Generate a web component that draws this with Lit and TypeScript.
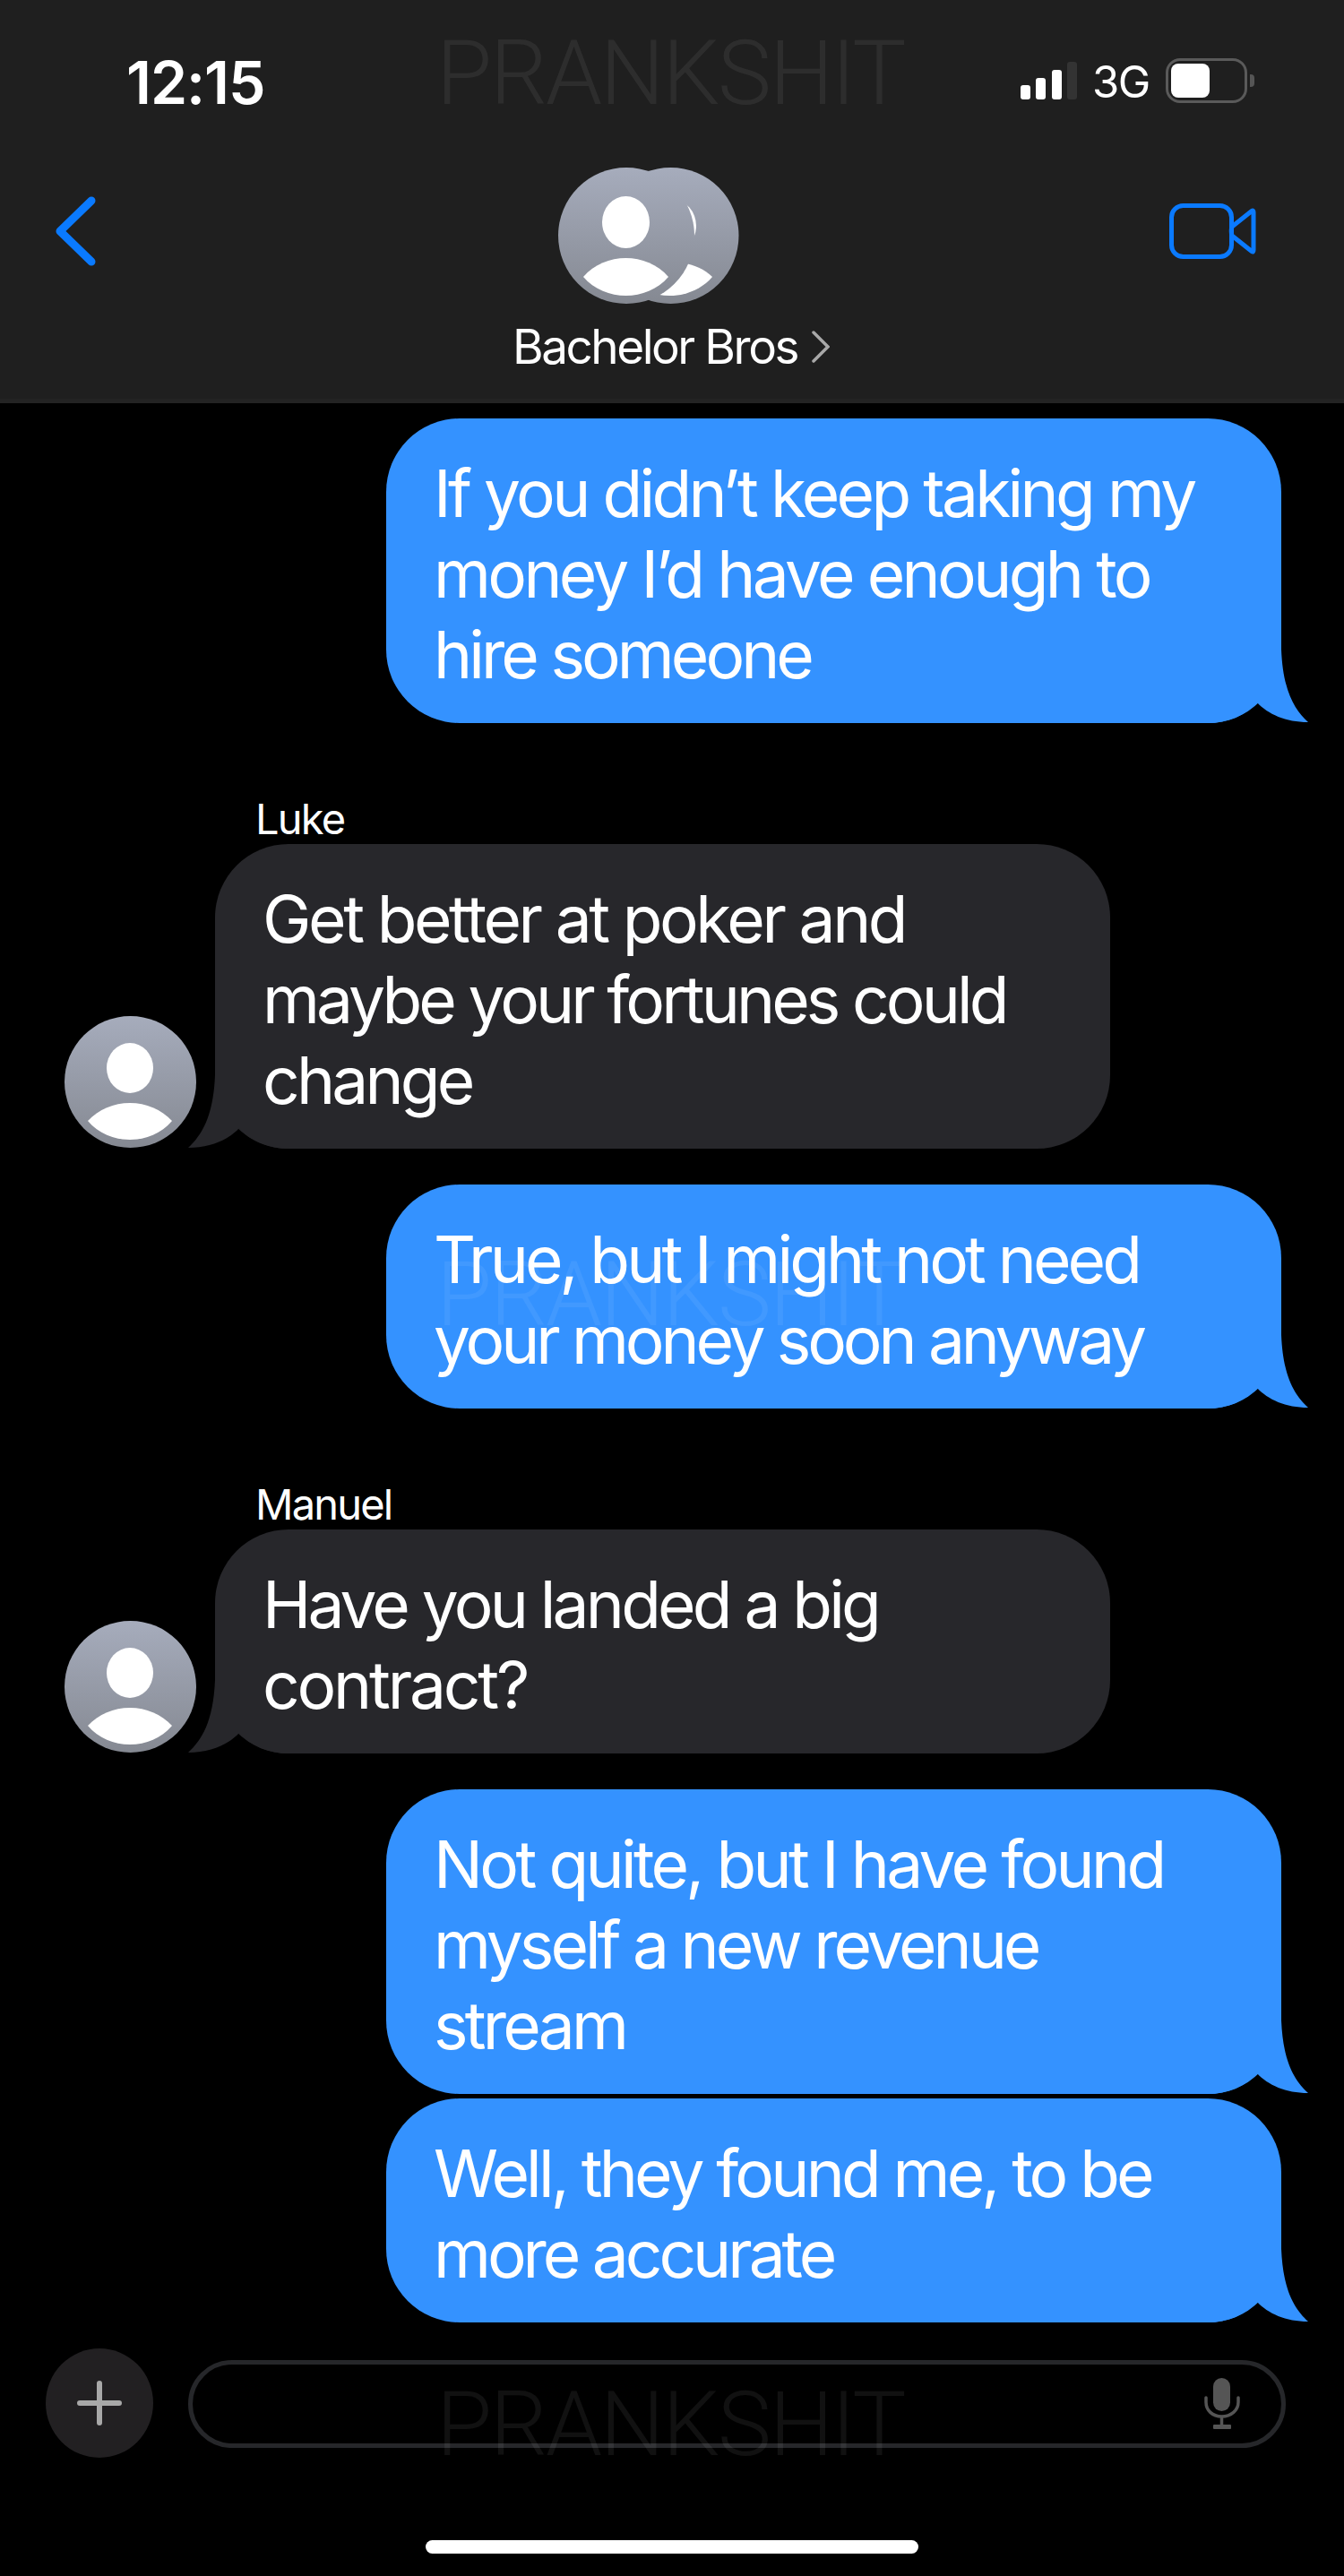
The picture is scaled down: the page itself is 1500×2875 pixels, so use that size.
import { LitElement, html, css, svg } from "lit";
import { customElement } from "lit/decorators.js";

type Line = [string, number];

const tail = (cls: string) => html`<svg class="tail ${cls}" viewBox="0 0 120 90" width="120" height="90"><path d="M0 0V90H7C30 90 50 82 63 67C75 80 95 89 120 89C105 75 92 55 90 8L90 0Z"/></svg>`;

const person = svg`<defs><linearGradient id="g" x1="0" y1="0" x2="0" y2="1"><stop offset="0" stop-color="#a6acbc"/><stop offset="1" stop-color="#858992"/></linearGradient></defs>`;

const avatar = html`<svg class="avatar" viewBox="0 0 147 147" width="147" height="147">${person}
  <circle cx="73.5" cy="73.5" r="73.5" fill="url(#g)"/>
  <ellipse cx="73" cy="58" rx="26" ry="28" fill="#fff"/>
  <path d="M26 117C38 104 55 97 73 97C91 97 108 104 120 117C108 131 91 138 73 138C55 138 38 131 26 117Z" fill="#fff"/></svg>`;

const lines = (ls: Line[]) => ls.map(([t, s]) => html`<span class="line" style="letter-spacing:${s}px">${t}</span>`);
const Sent = (ls: Line[]) => html`<div class="bubble sent">${lines(ls)}${tail("right")}</div>`;
const Recv = (name: string, ls: Line[]) => html`<div class="recv">
  ${avatar}
  <div class="recv-col">
    <div class="name">${name}</div>
    <div class="bubble in">${lines(ls)}${tail("left")}</div>
  </div></div>`;

@customElement("app-root")
export class AppRoot extends LitElement {
  static styles = css`
    :host { display: block; position: relative; width: 1500px; height: 2875px; background: #000; overflow: hidden; font-family: Inter, "Liberation Sans", Arial, sans-serif; color: #fff; }
    header { height: 450px; background: #1f1f1f; box-sizing: border-box; border-bottom: 5px solid #232323; }
    .status { height: 170px; display: flex; align-items: flex-start; justify-content: space-between; box-sizing: border-box; padding: 0 100px 0 141px; }
    .time { font-size: 66px; line-height: 67px; margin-top: 59px; letter-spacing: -1px; font-weight: 600; }
    .status-right { display: flex; align-items: flex-start; margin-top: 65px; }
    .bars { display: flex; align-items: flex-end; gap: 6.5px; height: 42px; margin-top: 4px; }
    .bars i { display: block; width: 11px; border-radius: 3px; background: #fff; }
    .bars i.b1 { height: 16px; } .bars i.b2 { height: 24px; } .bars i.b3 { height: 33px; } .bars i.b4 { height: 42px; background: #333; }
    .net { font-size: 49px; line-height: 50px; letter-spacing: -1.6px; margin: 2px 0 0 17px; width: 82px; }
    .batt { width: 91px; height: 50px; box-sizing: border-box; border: 3.5px solid #5a5a5a; border-radius: 16px; padding: 2.5px; }
    .batt b { display: block; width: 43px; height: 38px; background: #fff; border-radius: 8px; }
    .cap { width: 5px; height: 14px; background: #555; border-radius: 0 4px 4px 0; margin: 18px 0 0 3px; }
    .nav { display: grid; grid-template-columns: 1fr auto 1fr; }
    .back { margin: 46px 0 0 60px; display: block; }
    .center { display: flex; flex-direction: column; align-items: flex-start; padding-top: 17px; }
    .group { display: block; margin-left: 49px; }
    .title { display: flex; align-items: center; font-size: 53px; line-height: 54px; letter-spacing: -2.45px; margin: 21px 0 0 -2px; }
    .title svg { margin-left: 16px; }
    .video { margin: 57px 97px 0 auto; display: block; }
    main { display: flex; flex-direction: column; padding: 17px 70px 0 72px; }
    .sent { align-self: flex-end; }
    .bubble { position: relative; width: 999px; box-sizing: border-box; border-radius: 82px; padding: 39px 55px 31px 53px; font-size: 73px; line-height: 90px; }
    .bubble.sent { background: #3492ff; }
    .bubble.in { background: #27272b; }
    .line { display: block; white-space: nowrap; position: relative; z-index: 1; }
    .tail { position: absolute; bottom: 0; }
    .tail.right { right: -30px; fill: #3492ff; }
    .tail.left { left: -30px; fill: #27272b; transform: scaleX(-1); }
    .recv { display: flex; align-items: flex-end; }
    .recv-col { margin-left: 21px; }
    .avatar { display: block; margin-bottom: 1px; flex: none; }
    .name { font-size: 47px; line-height: 46px; letter-spacing: -1.8px; margin: 0 0 5px 45px; }
    .s40 { margin-top: 40px; } .s5 { margin-top: 5px; } .s-recv { margin-top: 84px; }
    .composer { position: absolute; left: 51px; right: 65px; top: 2621px; display: flex; align-items: center; gap: 39px; }
    .plus { width: 120px; height: 122px; border-radius: 50%; background: #222022; flex: none; display: flex; align-items: center; justify-content: center; }
    .field { flex: 1; height: 98px; box-sizing: border-box; border: 5px solid #26272a; border-radius: 49px; display: flex; align-items: center; justify-content: flex-end; padding-right: 45px; margin-top: 1px; }
    .home { position: absolute; left: 475px; top: 2835px; width: 550px; height: 15px; border-radius: 8px; background: #fff; }
    .mark { position: absolute; left: 487px; font-family: Roboto, sans-serif; font-weight: 300; font-size: 101px; line-height: 100px; letter-spacing: -2.2px; color: rgba(255,255,255,.065); white-space: nowrap; pointer-events: none; }
    .m1 { top: 32px; } .m2 { top: 1395px; } .m3 { top: 2656px; }
  `;

  render() {
    return html`
      <header>
        <div class="status">
          <div class="time">12:15</div>
          <div class="status-right">
            <div class="bars"><i class="b1"></i><i class="b2"></i><i class="b3"></i><i class="b4"></i></div>
            <div class="net">3G</div>
            <div class="batt"><b></b></div>
            <div class="cap"></div>
          </div>
        </div>
        <div class="nav">
          <svg class="back" width="50" height="84" viewBox="0 0 50 84"><path d="M42 8L7 42L42 76" fill="none" stroke="#0a7aff" stroke-width="9" stroke-linecap="round" stroke-linejoin="round"/></svg>
          <div class="center">
            <svg class="group" width="202" height="152" viewBox="0 0 202 152">${person}
              <circle cx="125.5" cy="76" r="76" fill="url(#g)"/>
              <ellipse cx="128" cy="65" rx="26" ry="29" fill="#fff"/>
              <path d="M77 122C89 110 107 105 124.500 105C142 105 160 110 172 122C160 136 142 143 124.500 143C107 143 89 136 77 122Z" fill="#fff"/>
              <circle cx="76" cy="76" r="76" fill="url(#g)"/>
              <ellipse cx="75.500" cy="61" rx="26.500" ry="29" fill="#fff"/>
              <path d="M28 122C40 108 58 101 75.500 101C93 101 111 108 123 122C111 136 93 143 75.500 143C58 143 40 136 28 122Z" fill="#fff"/>
            </svg>
            <div class="title">Bachelor Bros<svg width="20" height="36" viewBox="0 0 20 36"><path d="M2 2L18 18L2 34" fill="none" stroke="#a8a8a8" stroke-width="3.500" stroke-linecap="round"/></svg></div>
          </div>
          <svg class="video" width="98" height="64" viewBox="0 0 98 64"><g fill="none" stroke="#0a7aff" stroke-width="5" stroke-linejoin="round"><rect x="2.500" y="2.500" width="67" height="57" rx="13"/><path d="M70 26L92 8.500Q94 7 94 10V52Q94 55 92 53.500L70 36Q68.500 31 70 26Z"/></g></svg>
        </div>
      </header>
      <main>
        ${Sent([["If you didn’t keep taking my", -3.68], ["money I’d have enough to", -3.66], ["hire someone", -3.96]])}
        <div class="s-recv">${Recv("Luke", [["Get better at poker and", -3.44], ["maybe your fortunes could", -3.93], ["change", -3.8]])}</div>
        <div class="sent s40">${Sent([["True, but I might not need", -3.9], ["your money soon anyway", -4.12]])}</div>
        <div class="s-recv">${Recv("Manuel", [["Have you landed a big", -3.8], ["contract?", -3.2]])}</div>
        <div class="sent s40">${Sent([["Not quite, but I have found", -3.68], ["myself a new revenue", -4.02], ["stream", -3.8]])}</div>
        <div class="sent s5">${Sent([["Well, they found me, to be", -3.83], ["more accurate", -4.05]])}</div>
      </main>
      <div class="composer">
        <div class="plus"><svg width="50" height="50" viewBox="0 0 50 50"><path d="M25 3V47M3 25H47" stroke="#a8a8a8" stroke-width="6" stroke-linecap="round"/></svg></div>
        <div class="field"><svg width="42" height="60" viewBox="0 0 42 60"><rect x="11" y="1" width="19" height="37" rx="9.500" fill="#555"/><path d="M3 23V28C3 37 10 44 20.500 44C31 44 39 37 39 28V23" fill="none" stroke="#555" stroke-width="3.500" stroke-linecap="round"/><path d="M20.500 44V55" stroke="#555" stroke-width="3.500"/><rect x="11" y="53" width="20" height="5" rx="1" fill="#555"/></svg></div>
      </div>
      <div class="home"></div>
      <div class="mark m1">PRANKSHIT</div>
      <div class="mark m2">PRANKSHIT</div>
      <div class="mark m3">PRANKSHIT</div>
    `;
  }
}
